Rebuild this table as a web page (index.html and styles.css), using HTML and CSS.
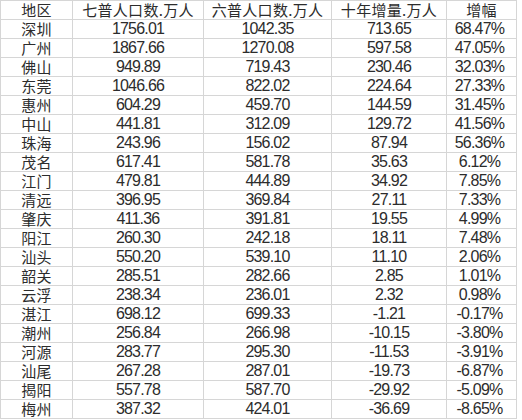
FILE: index.html
```html
<!DOCTYPE html>
<html lang="zh-CN">
<head>
<meta charset="utf-8">
<title>广东各市人口</title>
<link rel="stylesheet" href="styles.css">
</head>
<body>
<table class="sheet">
<colgroup>
<col class="c1"><col class="c2"><col class="c3"><col class="c4"><col class="c5">
</colgroup>
<thead>
<tr><th>地区</th><th>七普人口数.万人</th><th>六普人口数.万人</th><th>十年增量.万人</th><th>增幅</th></tr>
</thead>
<tbody>
<tr><td class="name">深圳</td><td>1756.01</td><td>1042.35</td><td>713.65</td><td class="pct">68.47%</td></tr>
<tr><td class="name">广州</td><td>1867.66</td><td>1270.08</td><td>597.58</td><td class="pct">47.05%</td></tr>
<tr><td class="name">佛山</td><td>949.89</td><td>719.43</td><td>230.46</td><td class="pct">32.03%</td></tr>
<tr><td class="name">东莞</td><td>1046.66</td><td>822.02</td><td>224.64</td><td class="pct">27.33%</td></tr>
<tr><td class="name">惠州</td><td>604.29</td><td>459.70</td><td>144.59</td><td class="pct">31.45%</td></tr>
<tr><td class="name">中山</td><td>441.81</td><td>312.09</td><td>129.72</td><td class="pct">41.56%</td></tr>
<tr><td class="name">珠海</td><td>243.96</td><td>156.02</td><td>87.94</td><td class="pct">56.36%</td></tr>
<tr><td class="name">茂名</td><td>617.41</td><td>581.78</td><td>35.63</td><td class="pct">6.12%</td></tr>
<tr><td class="name">江门</td><td>479.81</td><td>444.89</td><td>34.92</td><td class="pct">7.85%</td></tr>
<tr><td class="name">清远</td><td>396.95</td><td>369.84</td><td>27.11</td><td class="pct">7.33%</td></tr>
<tr><td class="name">肇庆</td><td>411.36</td><td>391.81</td><td>19.55</td><td class="pct">4.99%</td></tr>
<tr><td class="name">阳江</td><td>260.30</td><td>242.18</td><td>18.11</td><td class="pct">7.48%</td></tr>
<tr><td class="name">汕头</td><td>550.20</td><td>539.10</td><td>11.10</td><td class="pct">2.06%</td></tr>
<tr><td class="name">韶关</td><td>285.51</td><td>282.66</td><td>2.85</td><td class="pct">1.01%</td></tr>
<tr><td class="name">云浮</td><td>238.34</td><td>236.01</td><td>2.32</td><td class="pct">0.98%</td></tr>
<tr><td class="name">湛江</td><td>698.12</td><td>699.33</td><td>-1.21</td><td class="pct">-0.17%</td></tr>
<tr><td class="name">潮州</td><td>256.84</td><td>266.98</td><td>-10.15</td><td class="pct">-3.80%</td></tr>
<tr><td class="name">河源</td><td>283.77</td><td>295.30</td><td>-11.53</td><td class="pct">-3.91%</td></tr>
<tr><td class="name">汕尾</td><td>267.28</td><td>287.01</td><td>-19.73</td><td class="pct">-6.87%</td></tr>
<tr><td class="name">揭阳</td><td>557.78</td><td>587.70</td><td>-29.92</td><td class="pct">-5.09%</td></tr>
<tr><td class="name">梅州</td><td>387.32</td><td>424.01</td><td>-36.69</td><td class="pct">-8.65%</td></tr>
</tbody>
</table>
</body>
</html>
```
FILE: styles.css
```css
html, body {
  margin: 0;
  padding: 0;
  background: #ffffff;
}

.sheet {
  border-collapse: collapse;
  table-layout: fixed;
  width: 517px;
  color: #2c2c2c;
}

.c1 { width: 72px; }
.c2 { width: 131px; }
.c3 { width: 128px; }
.c4 { width: 115px; }
.c5 { width: 70px; }

.sheet th,
.sheet td {
  border: 1px solid #d6d6d6;
  height: 18px;
  padding: 0;
  line-height: 18px;
  text-align: center;
  white-space: nowrap;
  overflow: hidden;
  font-weight: normal;
}

.sheet th,
.sheet td.name {
  font-family: "Noto Sans CJK SC", sans-serif;
  font-size: 15px;
  letter-spacing: 0.3px;
}

.sheet td {
  font-family: "Liberation Sans", Arial, sans-serif;
  font-size: 16px;
  letter-spacing: -0.8px;
}

.sheet td.pct {
  padding-right: 4px;
}
```
